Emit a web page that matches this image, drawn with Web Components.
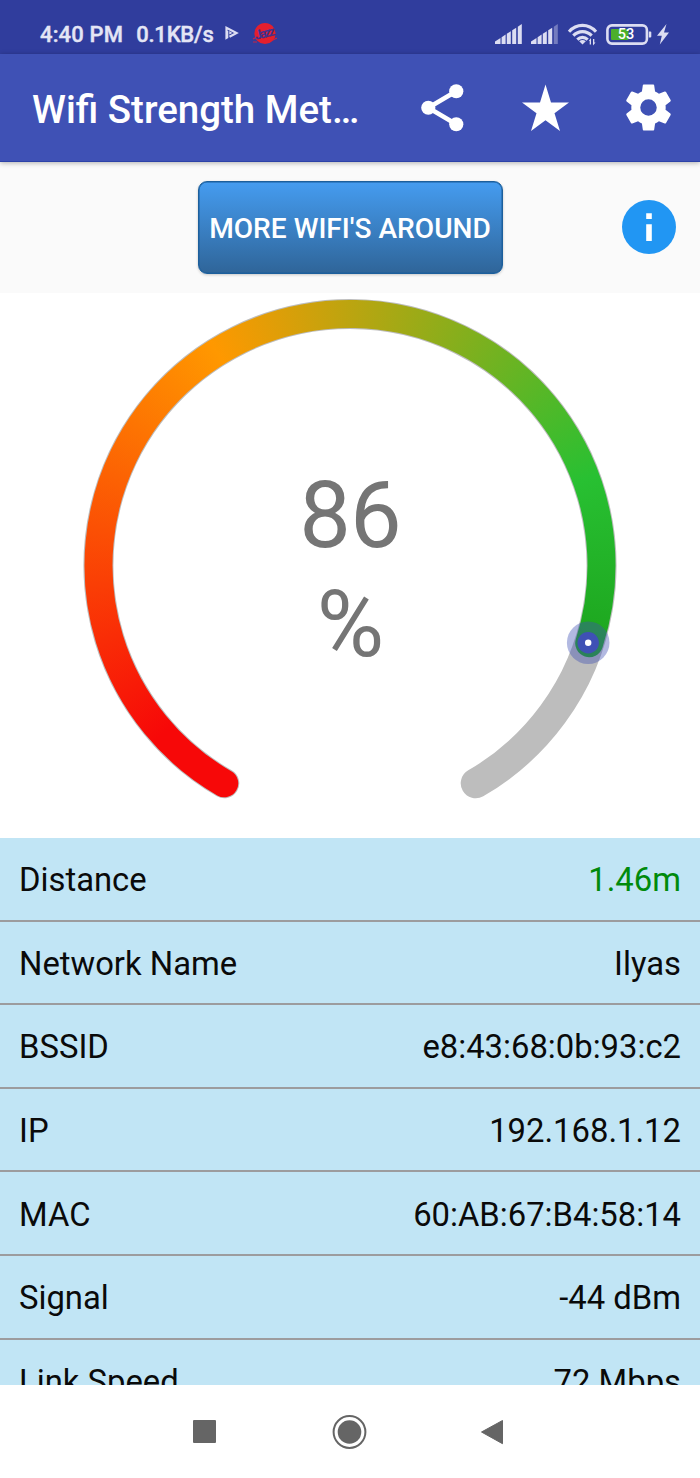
<!DOCTYPE html>
<html lang="en">
<head>
<meta charset="utf-8">
<title>Wifi Strength Meter</title>
<style>
    html, body { margin: 0; height: 100%; }
    body { font-family: Roboto, "Liberation Sans", sans-serif; overflow: hidden; background: #fff; }
</style>
</head>
<body>
<wifi-app></wifi-app>

<script>
class StatusBar extends HTMLElement {
    constructor() {
        super();
        this.attachShadow({ mode: 'open' });
    }

    // five slanted bars, the last one is dimmed when the signal is not full
    signal(lastOpacity) {
        const bars = [[0, 5.5], [6.6, 10.6], [11.8, 15.8], [17.2, 21.2], [22.8, 26.8]];
        return bars.map(([a, b], i) => {
            const top = x => 17.5 - x * 0.65;
            const o = i === 4 ? lastOpacity : 1;
            return `<path opacity="${o}" d="M${a} 20V${top(a)}L${b} ${top(b)}V20z"/>`;
        }).join('');
    }

    connectedCallback() {
        this.shadowRoot.innerHTML = `
            <style>
                :host {
                    display: flex;
                    align-items: center;
                    justify-content: space-between;
                    box-sizing: border-box;
                    height: 54px;
                    padding: 14px 31px 0 40px;
                    background: #303d9d;
                    color: #e4e5f5;
                    font-size: 22px;
                    font-weight: 500;
                    -webkit-text-stroke: 0.4px #e4e5f5;
                }
                .side { display: flex; align-items: center; height: 26px; }
                .clock { letter-spacing: 0.15px; margin-right: 13px; }
                .speed { margin-right: 11px; letter-spacing: -0.2px; }
                svg { display: block; fill: #dcddf2; overflow: visible; -webkit-text-stroke: 0; }
            </style>
            <div class="side">
                <span class="clock">4:40 PM</span>
                <span class="speed">0.1KB/s</span>
                <svg width="14" height="16" viewBox="0 0 14 16">
                    <path d="M1.500 5V1.800L11.500 7L4.500 10.800" fill="none" stroke="#dcddf2" stroke-width="2.200"/>
                    <path d="M0.400 5h2.900V12L0.400 13.800zM4.300 5l3 1.900-3 1.700z"/>
                </svg>
                <svg width="24" height="24" viewBox="0 0 24 24" style="margin-left:14px">
                    <circle cx="12" cy="11.500" r="10.600" fill="#e41f2d"/>
                    <path d="M0 17l4-2M20 18l4-2M0 20l4 0" stroke="#c92443" stroke-width="1.200"/>
                    <text x="12" y="15.500" text-anchor="middle" transform="rotate(-13 12 12)" font-size="13"
                        font-weight="700" fill="#40318c" textLength="21">Jazz</text>
                </svg>
            </div>
            <div class="side">
                <svg width="27" height="20" viewBox="0 0 27 20">${this.signal(1)}</svg>
                <svg width="27" height="20" viewBox="0 0 27 20" style="margin-left:9px">${this.signal(0.4)}</svg>
                <svg width="28" height="22" viewBox="0 0 28 22" style="margin-left:10px">
                    <g fill="none" stroke="#dcddf2" stroke-width="3.100">
                        <path d="M1 8.700C8.500.3 20.500.3 28 8.700"/>
                        <path d="M5.300 12.700C10.500 7.300 18.500 7.300 23.700 12.700"/>
                        <path d="M9.300 16.600C12.300 13.600 16.700 13.600 19.700 16.600"/>
                    </g>
                    <path d="M11.200 18.300Q14.500 15.800 17.800 18.300L14.500 21.500z"/>
                    <path d="M20.800 18l2.200-3v6.500h-1.300v-3.500zM25 22.500v-6.500h1.300v3.500h1.200z"/>
                </svg>
                <svg width="46" height="21" viewBox="0 0 46 21" style="margin-left:10px">
                    <rect x="1.400" y="1.400" width="39.500" height="18.200" rx="4.500" fill="none" stroke="#dcddf2" stroke-width="2.600"/>
                    <rect x="5" y="5" width="17.500" height="11" rx="1" fill="#4caf2a"/>
                    <path d="M42.800 7.500h1.500a1 1 0 0 1 1 1v4a1 1 0 0 1-1 1h-1.500z"/>
                    <text x="20" y="15.200" text-anchor="middle" font-size="14.500" font-weight="500" fill="#fff">53</text>
                </svg>
                <svg width="12" height="21" viewBox="0 0 12 21" style="margin-left:5px">
                    <path d="M9.500 0L0 11.700h4.800L2.800 20.500 12 8.500H7z"/>
                </svg>
            </div>
        `;
    }
}
customElements.define('status-bar', StatusBar);

class AppToolbar extends HTMLElement {
    constructor() {
        super();
        this.attachShadow({ mode: 'open' });
        this.shadowRoot.innerHTML = `
            <style>
                :host {
                    display: flex;
                    align-items: center;
                    justify-content: space-between;
                    box-sizing: border-box;
                    height: 108px;
                    padding: 0 24px 0 32px;
                    background: #3f51b5;
                    border-bottom: 1px solid #2c42a8;
                    box-shadow: 0 1px 5px rgba(0, 0, 0, 0.3);
                    position: relative;
                    color: #fff;
                }
                .title { font-size: 38.500px; font-weight: 500; padding-top: 4px; white-space: nowrap; }
                .actions { display: flex; gap: 48px; }
                svg { display: block; width: 55px; height: 55px; fill: #fff; }
            </style>
            <div class="title"><slot></slot></div>
            <div class="actions">
                <svg viewBox="0 0 24 24">
                    <path d="M18 4.900L5.800 12.100L18 19.300" fill="none" stroke="#fff" stroke-width="2"/>
                    <circle cx="18" cy="4.900" r="3.100"/>
                    <circle cx="5.800" cy="12.100" r="3.100"/>
                    <circle cx="18" cy="19.300" r="3.100"/>
                </svg>
                <svg viewBox="0 0 55 55">
                    <path d="M27.500 4.500L33 22.500H51L36.500 33.300L42 51L27.500 40.200L13 51L18.500 33.300L4 22.500H22z"/>
                </svg>
                <svg viewBox="0 0 24 24">
                    <path d="M19.430 12.980c.04-.32.07-.64.07-.98s-.03-.66-.07-.98l2.110-1.650c.19-.15.24-.42.12-.64l-2-3.460c-.12-.22-.39-.3-.61-.22l-2.490 1c-.52-.4-1.080-.73-1.690-.98l-.38-2.650C14.460 2.180 14.250 2 14 2h-4c-.25 0-.46.18-.49.42l-.38 2.650c-.61.25-1.170.59-1.690.98l-2.490-1c-.23-.09-.49 0-.61.22l-2 3.460c-.13.22-.07.49.12.64l2.110 1.650c-.04.32-.07.65-.07.98s.03.66.07.98l-2.110 1.650c-.19.15-.24.42-.12.64l2 3.460c.12.22.39.3.61.22l2.490-1c.52.4 1.080.73 1.690.98l.38 2.650c.03.24.24.42.49.42h4c.25 0 .46-.18.49-.42l.38-2.650c.61-.25 1.170-.59 1.690-.98l2.490 1c.23.09.49 0 .61-.22l2-3.460c.12-.22.07-.49-.12-.64l-2.110-1.650zM12 15.600a3.600 3.600 0 1 1 0-7.200 3.600 3.600 0 0 1 0 7.200z"/>
                </svg>
            </div>
        `;
    }
}
customElements.define('app-toolbar', AppToolbar);

class ActionStrip extends HTMLElement {
    constructor() {
        super();
        this.attachShadow({ mode: 'open' });
        this.shadowRoot.innerHTML = `
            <style>
                :host {
                    display: grid;
                    grid-template-columns: 1fr auto 1fr;
                    align-items: center;
                    box-sizing: border-box;
                    height: 131px;
                    padding: 0 24px;
                    background: #fafafa;
                }
                button {
                    grid-column: 2;
                    box-sizing: border-box;
                    width: 305px;
                    height: 93px;
                    padding: 2px 0 0;
                    border: 1px solid #1c5f9c;
                    border-radius: 9px;
                    background: linear-gradient(#459cf0, #2f6599);
                    box-shadow: inset 0 0 0 0.500px #1c5f9c, 0 1px 3px rgba(0, 0, 0, 0.2);
                    color: #fff;
                    font: 500 28.100px Roboto, "Liberation Sans", sans-serif;
                    white-space: nowrap;
                }
                svg { display: block; justify-self: end; margin-bottom: 2px; }
            </style>
            <button><slot></slot></button>
            <svg width="54" height="54" viewBox="0 0 54 54">
                <circle cx="27" cy="27" r="27" fill="#2196f3"/>
                <path d="M24.200 13.300h5.600v5.600h-5.600zM24.200 24.300h5.600V41h-5.600z" fill="#fff"/>
            </svg>
        `;
    }
}
customElements.define('action-strip', ActionStrip);

class SignalGauge extends HTMLElement {
    static get observedAttributes() {
        return ['value'];
    }

    constructor() {
        super();
        this.attachShadow({ mode: 'open' });

        this.cx = 350;
        this.cy = 272.5;
        this.r = 251.5;
        // degrees, clockwise from 3 o'clock
        this.start = 120;
        this.sweep = 300;
    }

    attributeChangedCallback() {
        this.render();
    }

    point(deg) {
        const a = deg * Math.PI / 180;
        return [this.cx + this.r * Math.cos(a), this.cy + this.r * Math.sin(a)];
    }

    arc(from, to) {
        const [x1, y1] = this.point(from);
        const [x2, y2] = this.point(to);
        const large = to - from > 180 ? 1 : 0;
        return `M${x1} ${y1}A${this.r} ${this.r} 0 ${large} 1 ${x2} ${y2}`;
    }

    render() {
        const value = Number(this.getAttribute('value') || 0);
        const end = this.start + this.sweep * value / 100;
        const [px, py] = this.point(end);

        this.shadowRoot.innerHTML = `
            <style>
                :host { display: grid; height: 545px; background: #fff; }
                svg, .reading { grid-area: 1 / 1; }
                .sweep {
                    width: 700px;
                    height: 545px;
                    background: conic-gradient(from 180deg at 350px 272px,
                        #f70808 0deg, #f70808 48deg, #ff9800 148deg, #28c032 250deg, #1ca31c 292deg, #1ca31c 320deg, #f70808 330deg);
                }
                .reading {
                    padding-top: 168px;
                    text-align: center;
                    color: #757575;
                    font-size: 92px;
                    line-height: 109px;
                    letter-spacing: -1px;
                }
            </style>
            <svg width="700" height="545" viewBox="0 0 700 545" fill="none" stroke-linecap="round">
                <mask id="progress" maskUnits="userSpaceOnUse" x="0" y="0" width="700" height="545">
                    <path d="${this.arc(this.start, end)}" stroke="#fff" stroke-width="28"/>
                </mask>
                <path d="${this.arc(this.start, this.start + this.sweep)}" stroke="#bdbdbd" stroke-width="30"/>
                <g mask="url(#progress)">
                    <foreignObject width="700" height="545"><div class="sweep"></div></foreignObject>
                </g>
                <circle cx="${px - 1}" cy="${py - 0.5}" r="21.300" fill="#3f51b5" fill-opacity="0.400"/>
                <circle cx="${px - 1}" cy="${py - 0.5}" r="10.700" fill="#3f51b5"/>
                <circle cx="${px - 1}" cy="${py - 0.5}" r="3.200" fill="#fff"/>
            </svg>
            <div class="reading">
                <div>${value}</div>
                <div>%</div>
            </div>
        `;
    }
}
customElements.define('signal-gauge', SignalGauge);

class InfoRow extends HTMLElement {
    constructor() {
        super();
        this.attachShadow({ mode: 'open' });
        this.shadowRoot.innerHTML = `
            <style>
                :host {
                    display: flex;
                    justify-content: space-between;
                    align-items: center;
                    flex: none;
                    box-sizing: border-box;
                    height: 83.600px;
                    padding: 3px 19px 0;
                    border-bottom: 2px solid #9c9c9e;
                    color: #0a0a0a;
                    font-size: 32.800px;
                    white-space: nowrap;
                }
                .value { color: var(--value-color, inherit); }
            </style>
            <span><slot name="label"></slot></span>
            <span class="value"><slot></slot></span>
        `;
    }
}
customElements.define('info-row', InfoRow);

class NavBar extends HTMLElement {
    constructor() {
        super();
        this.attachShadow({ mode: 'open' });
        this.shadowRoot.innerHTML = `
            <style>
                :host {
                    display: flex;
                    align-items: center;
                    justify-content: center;
                    gap: 109px;
                    height: 93px;
                    padding-right: 3px;
                    background: #fff;
                }
                svg { display: block; width: 35px; height: 35px; fill: #656565; overflow: visible; }
            </style>
            <svg viewBox="0 0 35 35"><rect x="6" y="6" width="23" height="23" rx="1"/></svg>
            <svg viewBox="0 0 35 35">
                <circle cx="18.500" cy="18" r="15.900" fill="none" stroke="#656565" stroke-width="2"/>
                <circle cx="18.500" cy="18" r="11.800"/>
            </svg>
            <svg viewBox="0 0 35 35"><path d="M27.500 6.500V29.700L6.500 18z" stroke="#656565" stroke-linejoin="round"/></svg>
        `;
    }
}
customElements.define('nav-bar', NavBar);

class WifiApp extends HTMLElement {
    constructor() {
        super();
        this.attachShadow({ mode: 'open' });
        this.rows = [
            ['Distance', '1.46m', '#008a0c'],
            ['Network Name', 'Ilyas'],
            ['BSSID', 'e8:43:68:0b:93:c2'],
            ['IP', '192.168.1.12'],
            ['MAC', '60:AB:67:B4:58:14'],
            ['Signal', '-44 dBm'],
            ['Link Speed', '72 Mbps']
        ];
    }

    connectedCallback() {
        const rowsHtml = this.rows.map(([label, value, color]) => `
            <info-row ${color ? `style="--value-color: ${color}"` : ''}><span slot="label">${label}</span>${value}</info-row>`
        ).join('');

        this.shadowRoot.innerHTML = `
            <style>
                :host { display: flex; flex-direction: column; width: 700px; height: 1478px; }
                status-bar, app-toolbar, action-strip, signal-gauge, nav-bar { flex: none; }
                .list {
                    display: flex;
                    flex: 1;
                    flex-direction: column;
                    min-height: 0;
                    overflow: hidden;
                    background: #c1e5f5;
                }
            </style>
            <status-bar></status-bar>
            <app-toolbar>Wifi Strength Met…</app-toolbar>
            <action-strip>MORE WIFI'S AROUND</action-strip>
            <signal-gauge value="86"></signal-gauge>
            <div class="list">${rowsHtml}</div>
            <nav-bar></nav-bar>
        `;
    }
}
customElements.define('wifi-app', WifiApp);
</script>
</body>
</html>
